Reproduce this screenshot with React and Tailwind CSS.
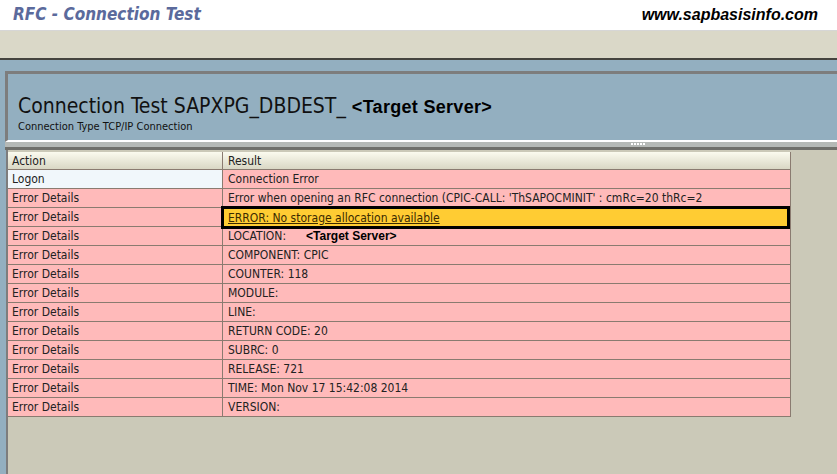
import React from 'react';

const rows = [
    { action: 'Logon', result: 'Connection Error', logon: true },
    { action: 'Error Details', result: "Error when opening an RFC connection (CPIC-CALL: 'ThSAPOCMINIT' : cmRc=20 thRc=2" },
    { action: 'Error Details', result: 'ERROR: No storage allocation available', highlight: true },
    { action: 'Error Details', result: 'LOCATION:', target: true },
    { action: 'Error Details', result: 'COMPONENT: CPIC' },
    { action: 'Error Details', result: 'COUNTER: 118' },
    { action: 'Error Details', result: 'MODULE:' },
    { action: 'Error Details', result: 'LINE:' },
    { action: 'Error Details', result: 'RETURN CODE: 20' },
    { action: 'Error Details', result: 'SUBRC: 0' },
    { action: 'Error Details', result: 'RELEASE: 721' },
    { action: 'Error Details', result: 'TIME: Mon Nov 17 15:42:08 2014' },
    { action: 'Error Details', result: 'VERSION:' },
];

const tahoma = { fontFamily: '"DejaVu Sans Condensed", "DejaVu Sans", sans-serif' };
const arial = { fontFamily: '"Liberation Sans", Arial, sans-serif' };

const App = () => {
    return (
        <div className="w-[837px] h-[474px] overflow-hidden bg-[#cbc9b8] flex flex-col" style={tahoma}>
            {/* top title bar */}
            <div className="h-[31px] bg-white border-b border-[#d6d6d6] flex items-center justify-between pl-[13px] pr-[19px]">
                <span className="text-[17px] font-bold italic text-[#5b6a9c]" style={tahoma}>RFC - Connection Test</span>
                <span className="text-[16px] font-bold italic text-black" style={arial}>
                    www.sapbasisinfo.com
                </span>
            </div>

            {/* toolbar band */}
            <div className="h-[29px] bg-[#dad8c8] border-b-2 border-[#45443f]" />

            {/* header area */}
            <div className="bg-[#93afc0] pt-[11px] pl-[5px]">
                <div className="h-[71px] border-t-[3px] border-l-[3px] border-t-[#7d7d7d] border-l-[#7d7d7d] border-b-[2px] border-b-white pl-[10px] pt-[22px]">
                    <div className="flex items-baseline leading-none">
                        <span className="text-[21px] text-[#111]">Connection Test SAPXPG_DBDEST_</span>
                        <span className="ml-[6px] text-[18px] font-bold text-black tracking-[0.3px]" style={arial}>
                            &lt;Target Server&gt;
                        </span>
                    </div>
                    <div className="text-[11px] text-[#111] mt-[4px] leading-none">Connection Type TCP/IP Connection</div>
                </div>
                <div className="relative h-[8px] bg-[#b5b9b6] border-b-[3px] border-[#6f6f6a]">
                    <div className="absolute left-[626px] top-[1px] flex gap-[1px]">
                        {[0, 1, 2, 3, 4].map((i) => (
                            <div key={i} className="w-[2px] h-[2px] bg-white" />
                        ))}
                    </div>
                </div>
            </div>

            {/* table area */}
            <div className="flex flex-1">
                <div className="w-[8px] bg-[#93afc0] border-r-2 border-[#7d7d7d]" />
                <div className="pt-[2px]">
                    <div className="w-[783px] border-r border-[#8a7b70]">
                        <div className="flex h-[18px] text-[12px] text-[#222] bg-gradient-to-b from-[#fbfbef] to-[#d9d7c4] border-b border-[#8a7b70]">
                            <div className="w-[215px] pl-[4px] flex items-center border-r border-[#8a7b70]">Action</div>
                            <div className="flex-1 pl-[5px] flex items-center">Result</div>
                        </div>
                        {rows.map((r, i) => (
                            <div key={i} className="flex h-[19px] text-[12px] text-[#222] border-b border-[#8a7b70]">
                                <div
                                    className={`w-[215px] pl-[4px] flex items-center border-r border-[#8a7b70] ${
                                        r.logon ? 'bg-[#f1f7fb]' : 'bg-[#ffbaba]'
                                    }`}
                                >
                                    {r.action}
                                </div>
                                {r.highlight ? (
                                    <div className="flex-1 bg-[#ffbaba] relative">
                                        <div className="absolute left-[-2px] right-0 top-[-2px] bottom-[-3px] border-[3px] border-black bg-[#ffcc33] flex items-center pl-[4px] text-[#3b2a00] underline">
                                            {r.result}
                                        </div>
                                    </div>
                                ) : (
                                    <div className="flex-1 bg-[#ffbaba] pl-[5px] flex items-center">
                                        {r.result}
                                        {r.target && (
                                            <span className="ml-[20px] text-[12px] font-bold text-black" style={arial}>
                                                &lt;Target Server&gt;
                                            </span>
                                        )}
                                    </div>
                                )}
                            </div>
                        ))}
                    </div>
                </div>
            </div>
        </div>
    );
};

export default App;
